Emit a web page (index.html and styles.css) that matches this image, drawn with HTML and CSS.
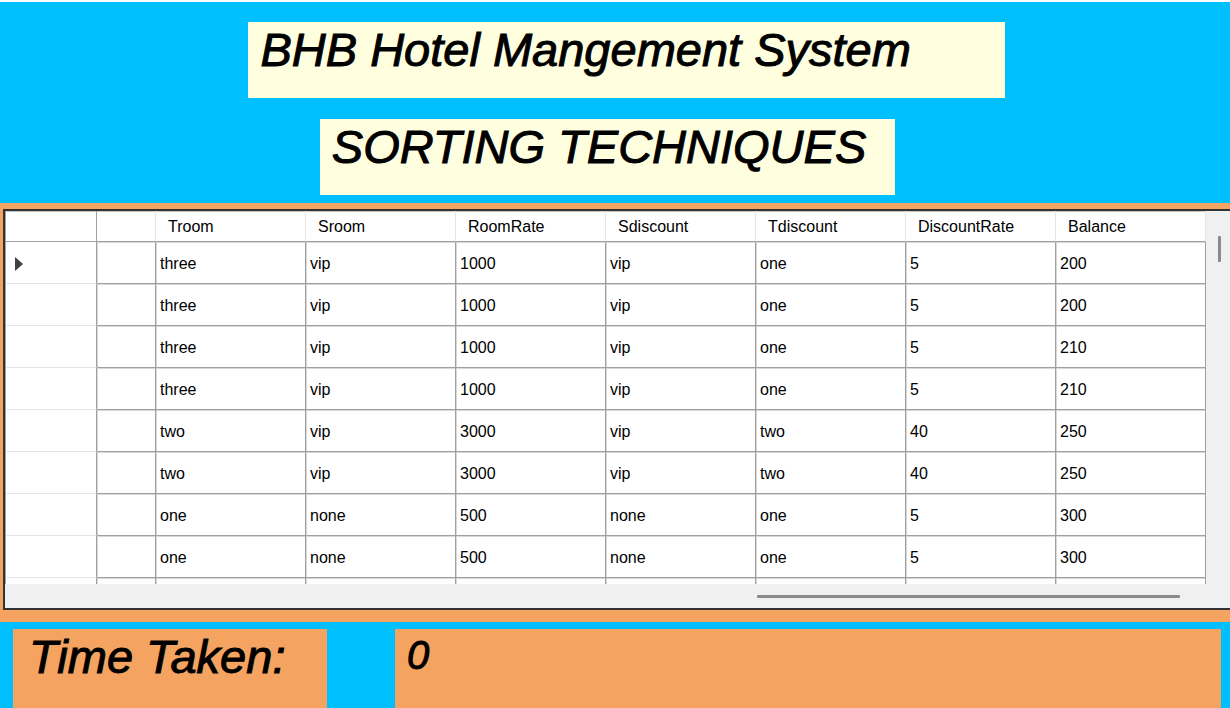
FILE: index.html
```html
<!DOCTYPE html>
<html lang="en">
<head>
<meta charset="utf-8">
<title>BHB Hotel Mangement System</title>
<link rel="stylesheet" href="styles.css">
</head>
<body>
<header class="banner">
  <h1 class="plate plate-title">BHB Hotel Mangement System</h1>
  <h2 class="plate plate-subtitle">SORTING TECHNIQUES</h2>
</header>
<main class="grid-panel">
  <div class="grid-frame">
    <div class="grid-body">
      <table class="grid">
        <colgroup><col class="col-marker"><col class="col-narrow"><col><col><col><col><col><col><col></colgroup>
        <thead>
          <tr><th></th><th></th><th scope="col">Troom</th><th scope="col">Sroom</th><th scope="col">RoomRate</th><th scope="col">Sdiscount</th><th scope="col">Tdiscount</th><th scope="col">DiscountRate</th><th scope="col">Balance</th></tr>
        </thead>
        <tbody>
          <tr><td><svg class="marker" viewBox="0 0 8 14" aria-hidden="true"><path d="M0 0L8 7L0 14Z"/></svg></td><td></td><td>three</td><td>vip</td><td>1000</td><td>vip</td><td>one</td><td>5</td><td>200</td></tr>
          <tr><td></td><td></td><td>three</td><td>vip</td><td>1000</td><td>vip</td><td>one</td><td>5</td><td>200</td></tr>
          <tr><td></td><td></td><td>three</td><td>vip</td><td>1000</td><td>vip</td><td>one</td><td>5</td><td>210</td></tr>
          <tr><td></td><td></td><td>three</td><td>vip</td><td>1000</td><td>vip</td><td>one</td><td>5</td><td>210</td></tr>
          <tr><td></td><td></td><td>two</td><td>vip</td><td>3000</td><td>vip</td><td>two</td><td>40</td><td>250</td></tr>
          <tr><td></td><td></td><td>two</td><td>vip</td><td>3000</td><td>vip</td><td>two</td><td>40</td><td>250</td></tr>
          <tr><td></td><td></td><td>one</td><td>none</td><td>500</td><td>none</td><td>one</td><td>5</td><td>300</td></tr>
          <tr><td></td><td></td><td>one</td><td>none</td><td>500</td><td>none</td><td>one</td><td>5</td><td>300</td></tr>
          <tr class="row-cut"><td></td><td></td><td></td><td></td><td></td><td></td><td></td><td></td><td></td></tr>
        </tbody>
      </table>
    </div>
    <div class="scroll-y"><div class="thumb-y"></div></div>
    <div class="scroll-x"><div class="thumb-x"></div></div>
  </div>
</main>
<footer class="timing">
  <label class="timing-label" for="elapsed">Time Taken:</label>
  <output class="timing-value" id="elapsed">0</output>
</footer>
</body>
</html>
```
FILE: styles.css
```css
* { box-sizing: border-box; }

body {
  margin: 0;
  padding-top: 2px;
  min-height: 100vh;
  display: flex;
  flex-direction: column;
  background: #fff;
  color: #000;
  font-family: "Liberation Sans", Arial, sans-serif;
}

.banner {
  display: flex;
  flex-direction: column;
  gap: 21px;
  padding: 20px 0 8px;
  background: #00bfff;
}

.plate {
  margin: 0;
  padding: 0 12px;
  height: 76px;
  background: #ffffe0;
  font-size: 47px;
  line-height: 56px;
  font-weight: 400;
  font-style: italic;
  white-space: nowrap;
  -webkit-text-stroke: 1px #000;
}

.plate-title { width: 61.5%; margin-left: 20.2%; }
.plate-subtitle { width: 46.8%; margin-left: 26%; }

.grid-panel {
  padding: 6px 0 12px 3px;
  background: #f4a460;
}

.grid-frame {
  display: grid;
  grid-template-columns: 1fr 24px;
  border: 2px solid #333;
  border-right: 0;
  background: #f0f0f0;
}

.grid-body {
  overflow: hidden;
  background: #fff;
  border-left: 1px solid #a0a0a0;
}

.grid {
  width: 100%;
  table-layout: fixed;
  border-collapse: separate;
  border-spacing: 0;
  font-size: 16px;
  line-height: 20px;
}

.col-marker { width: 91px; }
.col-narrow { width: 59px; }

.grid th {
  height: 31px;
  padding: 2px 0 0 12px;
  border-right: 1px solid #e5e5e5;
  border-bottom: 1px solid #a0a0a0;
  box-shadow: inset 0 1px #c8c8c8;
  font-weight: 400;
  text-align: left;
}

.grid td {
  height: 42px;
  padding: 2px 0 0 4px;
  border-right: 1px solid #a0a0a0;
  border-bottom: 1px solid #a0a0a0;
  box-shadow: inset 1px 1px #d8d8d8;
}

.grid th:first-child { border-right-color: #a0a0a0; }

.grid td:first-child {
  padding-left: 9px;
  border-bottom-color: #e5e5e5;
  box-shadow: none;
}

.grid .row-cut td {
  height: 6px;
  padding: 0;
  border-bottom: 0;
}

.marker {
  display: block;
  width: 8px;
  height: 14px;
  fill: #404040;
}

.scroll-y { padding: 25px 0 0 12px; }

.thumb-y {
  width: 3px;
  height: 26px;
  border-radius: 1px;
  background: #8a8a8a;
}

.scroll-x {
  grid-column: 1 / -1;
  height: 24px;
  padding: 11px 50px 0 0;
}

.thumb-x {
  width: 36%;
  height: 3px;
  margin-left: auto;
  border-radius: 1px;
  background: #8a8a8a;
}

.timing {
  flex: 1;
  display: flex;
  gap: 68px;
  padding: 7px 9px 0 13px;
  background: #00bfff;
  font-style: italic;
  -webkit-text-stroke: 1px #000;
}

.timing-label,
.timing-value {
  padding: 0 12px;
  background: #f4a460;
  line-height: 56px;
}

.timing-label {
  flex: 0 0 314px;
  padding-left: 16px;
  font-size: 47px;
}

.timing-value {
  flex: 1;
  font-size: 40px;
  line-height: 52px;
}
```
